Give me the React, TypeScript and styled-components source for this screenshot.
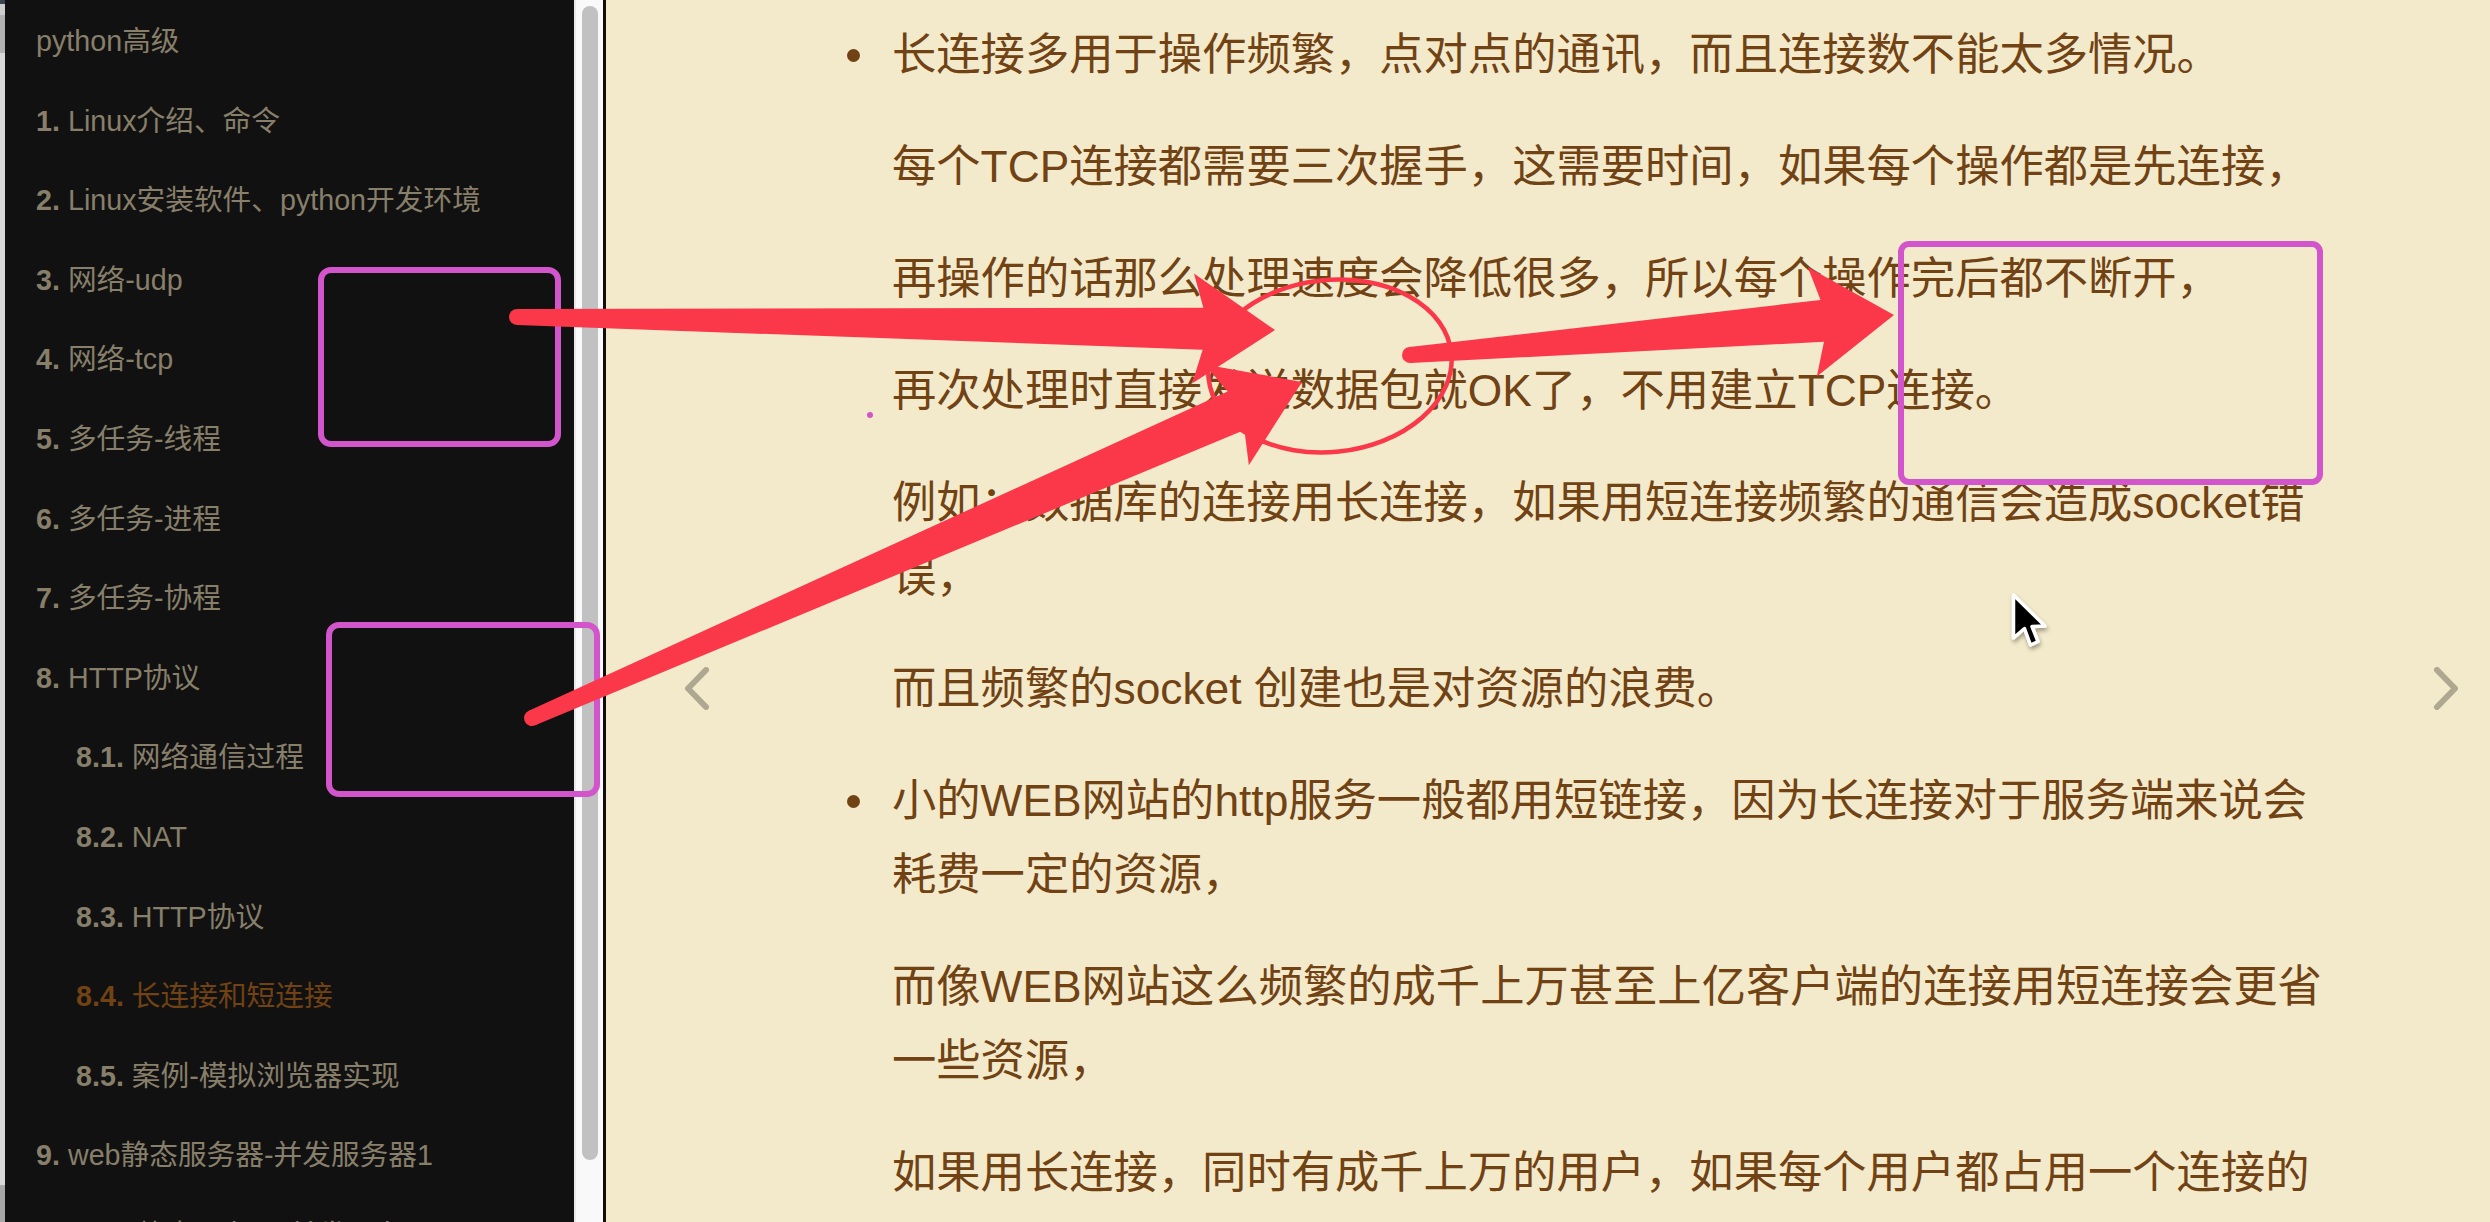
import React from "react";
import styled, { createGlobalStyle } from "styled-components";

const GlobalStyle = createGlobalStyle`
  html, body {
    margin: 0;
    padding: 0;
    width: 2490px;
    height: 1222px;
    overflow: hidden;
    background: #f3eacb;
  }
  #root { width: 2490px; height: 1222px; }
  * { box-sizing: border-box; }
`;

const Screen = styled.div`
  position: relative;
  display: flex;
  width: 2490px;
  height: 1222px;
  overflow: hidden;
  font-family: "Liberation Sans", "Noto Sans CJK SC", sans-serif;
`;

const WindowEdge = styled.div`
  flex: 0 0 5px;
  background: linear-gradient(
    to bottom,
    #3d4450 0 4px,
    #cdcdcd 4px 15px,
    #b2b2b2 15px 53px,
    #d9d9d9 53px 1185px,
    #a8a8a8 1185px
  );
`;

const Sidebar = styled.aside`
  flex: 0 0 598px;
  display: flex;
  background: #111111;
`;

const Summary = styled.ul`
  flex: 1;
  list-style: none;
  margin: 0;
  padding: 2px 0 0;
  overflow: hidden;
`;

const SummaryItem = styled.li<{ $sub?: boolean; $active?: boolean }>`
  padding: 20px 0 20px ${(p) => (p.$sub ? 71 : 31)}px;
  font-size: 28.7px;
  line-height: 39.6px;
  white-space: nowrap;
  color: ${(p) => (p.$active ? "#704214" : "#877f6a")};
`;

const ChapterNo = styled.b`
  font-weight: bold;
`;

const ScrollTrack = styled.div`
  flex: 0 0 29px;
  background: #f9f9f9;
  border-left: 2px solid #e9e9e9;
  padding: 6px 5px 0 6px;
`;

const ScrollThumb = styled.div`
  height: 1154px;
  border-radius: 8px;
  background: #c1c1c1;
`;

const Divider = styled.div`
  flex: 0 0 3px;
  background: #0e0e0e;
`;

const Content = styled.main`
  position: relative;
  flex: 1;
  background: #f3eacb;
  color: #704214;
  font-size: 44.3px;
  line-height: 74px;
`;

const Article = styled.ul`
  list-style: none;
  margin: 0;
  padding: 18px 0 0 224px;
`;

const ListItem = styled.li`
  display: grid;
  grid-template-columns: 62px 1440px;
  align-items: start;
`;

const Bullet = styled.span`
  height: 74px;
  display: flex;
  align-items: center;
  justify-content: flex-end;
  padding-right: 32px;
  &::before {
    content: "";
    width: 13px;
    height: 13px;
    border-radius: 50%;
    background: #704214;
  }
`;

const ItemBody = styled.div`
  display: flex;
  flex-direction: column;
`;

const Para = styled.p`
  margin: 0 0 38px;
`;

const NavArrow = styled.div<{ $side: "left" | "right" }>`
  position: absolute;
  top: 667px;
  ${(p) => (p.$side === "left" ? "left: 78px;" : "right: 32px;")}
  width: 26px;
  height: 43px;
  display: flex;
`;

const Overlay = styled.svg`
  position: absolute;
  left: 0;
  top: 0;
  width: 2490px;
  height: 1222px;
  pointer-events: none;
  z-index: 10;
`;

type ArrowProps = { x1: number; y1: number; x2: number; y2: number };

const RED = "#fb3849";
const MAGENTA = "#d355cc";

function Arrow({ x1, y1, x2, y2 }: ArrowProps) {
  const dx = x2 - x1;
  const dy = y2 - y1;
  const L = Math.sqrt(dx * dx + dy * dy);
  const deg = (Math.atan2(dy, dx) * 180) / Math.PI;
  const t0 = 8;
  const t1 = 21;
  const j = L - 72;
  const b = L - 82;
  const pts = [
    [0, -t0],
    [j, -t1],
    [b, -55],
    [L, 0],
    [b, 55],
    [j, t1],
    [0, t0],
  ]
    .map((p) => p.join(","))
    .join(" ");
  return (
    <g transform={`translate(${x1} ${y1}) rotate(${deg})`}>
      <circle cx={0} cy={0} r={t0} fill={RED} />
      <polygon points={pts} fill={RED} strokeLinejoin="round" />
    </g>
  );
}

const summary: { no?: string; text: string; sub?: boolean; active?: boolean }[] = [
  { text: "python高级" },
  { no: "1.", text: "Linux介绍、命令" },
  { no: "2.", text: "Linux安装软件、python开发环境" },
  { no: "3.", text: "网络-udp" },
  { no: "4.", text: "网络-tcp" },
  { no: "5.", text: "多任务-线程" },
  { no: "6.", text: "多任务-进程" },
  { no: "7.", text: "多任务-协程" },
  { no: "8.", text: "HTTP协议" },
  { no: "8.1.", text: "网络通信过程", sub: true },
  { no: "8.2.", text: "NAT", sub: true },
  { no: "8.3.", text: "HTTP协议", sub: true },
  { no: "8.4.", text: "长连接和短连接", sub: true, active: true },
  { no: "8.5.", text: "案例-模拟浏览器实现", sub: true },
  { no: "9.", text: "web静态服务器-并发服务器1" },
  { no: "10.", text: "web静态服务器-并发服务器2" },
];

function Chevron({ dir }: { dir: "left" | "right" }) {
  const points = dir === "left" ? "22,3 4,21.5 22,40" : "5,3 23,21.5 5,40";
  return (
    <svg width="26" height="43" viewBox="0 0 26 43">
      <polyline
        points={points}
        fill="none"
        stroke="#afa790"
        strokeWidth="6"
        strokeLinecap="round"
        strokeLinejoin="round"
      />
    </svg>
  );
}

export default function App() {
  return (
    <>
      <GlobalStyle />
      <Screen>
        <WindowEdge />
        <Sidebar>
          <Summary>
            {summary.map((s, i) => (
              <SummaryItem key={i} $sub={s.sub} $active={s.active}>
                {s.no && <ChapterNo>{s.no}</ChapterNo>}
                {s.no ? " " : ""}
                {s.text}
              </SummaryItem>
            ))}
          </Summary>
          <ScrollTrack>
            <ScrollThumb />
          </ScrollTrack>
        </Sidebar>
        <Divider />
        <Content>
          <Article>
            <ListItem>
              <Bullet />
              <ItemBody>
                <Para>长连接多用于操作频繁，点对点的通讯，而且连接数不能太多情况。</Para>
                <Para>每个TCP连接都需要三次握手，这需要时间，如果每个操作都是先连接，</Para>
                <Para>再操作的话那么处理速度会降低很多，所以每个操作完后都不断开，</Para>
                <Para>再次处理时直接发送数据包就OK了，不用建立TCP连接。</Para>
                <Para>例如：数据库的连接用长连接，如果用短连接频繁的通信会造成socket错误，</Para>
                <Para>而且频繁的socket 创建也是对资源的浪费。</Para>
              </ItemBody>
            </ListItem>
            <ListItem>
              <Bullet />
              <ItemBody>
                <Para>小的WEB网站的http服务一般都用短链接，因为长连接对于服务端来说会耗费一定的资源，</Para>
                <Para>而像WEB网站这么频繁的成千上万甚至上亿客户端的连接用短连接会更省一些资源，</Para>
                <Para>如果用长连接，同时有成千上万的用户，如果每个用户都占用一个连接的话，那可想而知吧。</Para>
              </ItemBody>
            </ListItem>
          </Article>
          <NavArrow $side="left">
            <Chevron dir="left" />
          </NavArrow>
          <NavArrow $side="right">
            <Chevron dir="right" />
          </NavArrow>
        </Content>

        <Overlay viewBox="0 0 2490 1222">
          <defs>
            <filter id="cursorShadow" x="-30%" y="-30%" width="160%" height="160%">
              <feDropShadow dx="1" dy="3" stdDeviation="2" floodColor="#000" floodOpacity="0.35" />
            </filter>
          </defs>
          <rect x={321} y={270} width={237} height={174} rx={10} fill="none" stroke={MAGENTA} strokeWidth={6} />
          <rect x={329} y={625} width={268} height={169} rx={10} fill="none" stroke={MAGENTA} strokeWidth={6} />
          <rect x={1901} y={244} width={419} height={238} rx={8} fill="none" stroke={MAGENTA} strokeWidth={6} />
          <circle cx={870} cy={415} r={3} fill={MAGENTA} />
          <ellipse
            cx={1330}
            cy={366}
            rx={122}
            ry={86}
            transform="rotate(-6 1330 366)"
            fill="none"
            stroke={RED}
            strokeWidth={4.5}
          />
          <Arrow x1={517} y1={317} x2={1275} y2={330} />
          <Arrow x1={532} y1={718} x2={1302} y2={382} />
          <Arrow x1={1410} y1={355} x2={1894} y2={315} />
          <g transform="translate(2012 593)" filter="url(#cursorShadow)">
            <path
              d="M1.5 2 L1.5 45 L12.5 35.5 L18.5 52 L26 48.5 L20 33.5 L33 33 Z"
              fill="#000"
              stroke="#fff"
              strokeWidth="3.5"
              strokeLinejoin="round"
            />
          </g>
        </Overlay>
      </Screen>
    </>
  );
}
